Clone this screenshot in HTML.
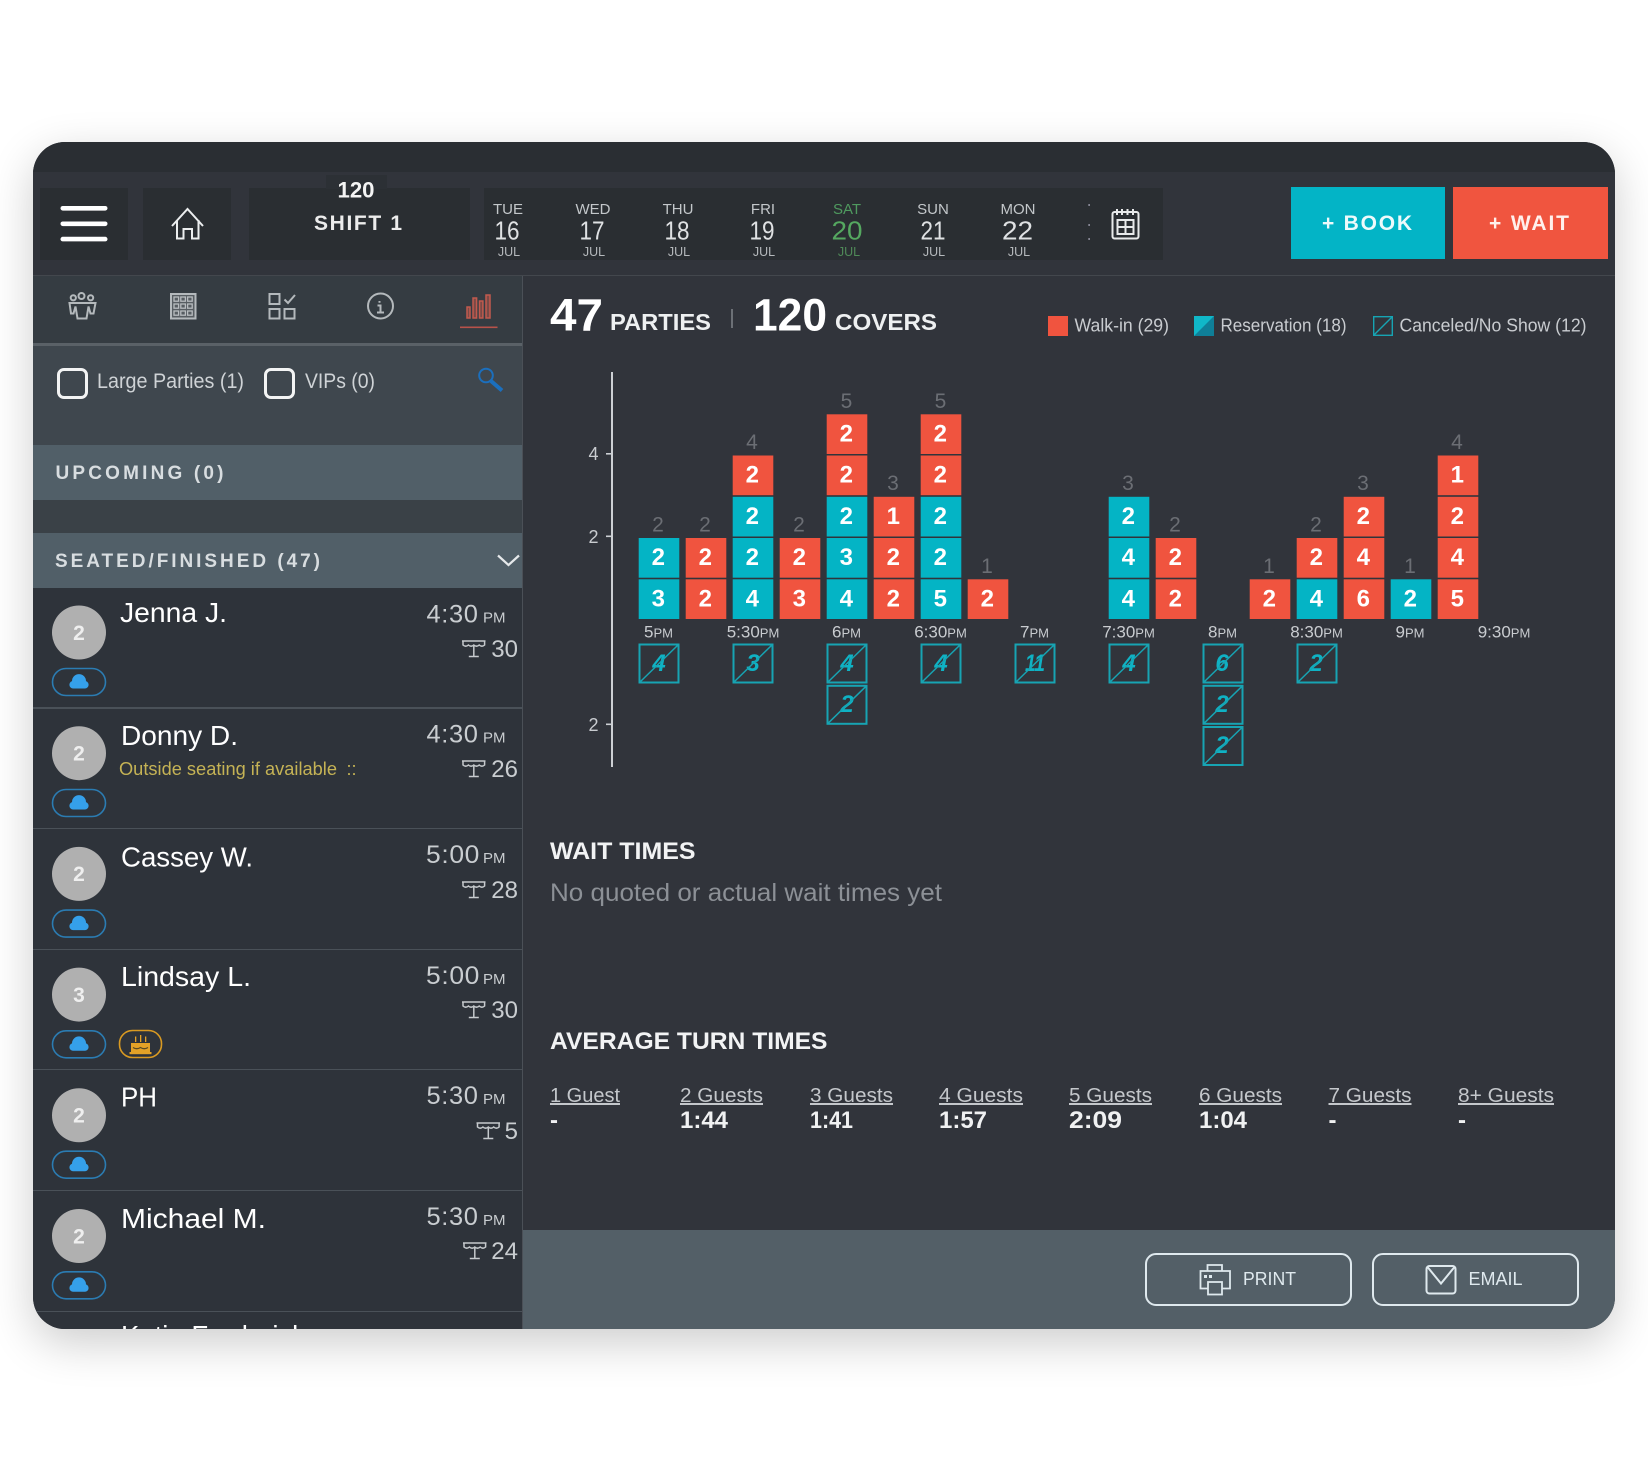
<!DOCTYPE html>
<html lang="en"><head><meta charset="utf-8"><title>Shift report</title>
<style>
html,body{margin:0;padding:0;background:#fff;width:1648px;height:1470px;overflow:hidden}
body{position:relative;font-family:"Liberation Sans",sans-serif}
.card{position:absolute;left:33px;top:142px;width:1582px;height:1187px;border-radius:32px;overflow:hidden;background:#31343b;box-shadow:0 14px 45px rgba(0,0,0,.2)}
.b{position:absolute}
svg{position:absolute;left:-33px;top:-142px;width:1648px;height:1470px}
text{font-family:"Liberation Sans",sans-serif}
rect.t,rect.r,rect.x{width:40.6px;height:39.7px}
rect.t{fill:#04b4c5}rect.r{fill:#f0543f}
rect.x{fill:none;stroke:#17a4b3;stroke-width:2;width:39px;height:38px}
.d{font-size:24px;font-weight:700;fill:#fff;text-anchor:middle;transform:translate(-.7px,-.5px)}
.c{font-size:21px;fill:#6b6e74;text-anchor:middle}
.xd{font-size:24px;font-weight:700;font-style:italic;fill:#0fb2c4;text-anchor:middle;transform:translateY(-1px)}
.dg{stroke:#17a4b3;stroke-width:1.5}
.tm{font-size:17px;fill:#c9ccd0;text-anchor:middle}
.tm tspan{font-size:13px}
.ax{font-size:18px;fill:#c9ccd0;text-anchor:end}
.dw{font-size:15px;fill:#c3c7ca;text-anchor:middle}
.dn{font-size:26px;fill:#dfe1e3;text-anchor:middle}
.dj{font-size:12.5px;fill:#b5b9bc;text-anchor:middle}
.nm{font-size:27.5px;fill:#fff}
.ti{font-size:25px;fill:#c9cdd0;letter-spacing:.6px}
.pm{font-size:15px;fill:#c9cdd0}
.tb{font-size:24px;fill:#c9cdd0;text-anchor:end}
.av{font-size:21px;font-weight:700;fill:#efefef;text-anchor:middle}
.g{font-size:20px;fill:#c4c7cb;text-decoration:underline}
.v{font-size:24px;font-weight:700;fill:#f0f1f2}
.sec{font-size:24px;font-weight:700;fill:#f2f3f4}
.lg{font-size:18px;fill:#c9ccd0}
</style></head>
<body>
<div class="card">
  <div class="b" style="left:0;top:0;width:1582px;height:30px;background:#2a2e33"></div>
  <div class="b" style="left:0;top:30px;width:1582px;height:103px;background:#31343b;border-bottom:1px solid #43474d"></div>
  <div class="b" style="left:7px;top:46px;width:88px;height:72px;background:#2a2e32"></div>
  <div class="b" style="left:110px;top:46px;width:88px;height:72px;background:#2a2e32"></div>
  <div class="b" style="left:216px;top:46px;width:221px;height:72px;background:#2a2e32"></div>
  <div class="b" style="left:293px;top:33px;width:61px;height:14px;background:#2c3035"></div>
  <div class="b" style="left:451px;top:46px;width:679px;height:72px;background:#2a2e32"></div>
  <div class="b" style="left:1258px;top:45px;width:154px;height:72px;background:#03b4c6"></div>
  <div class="b" style="left:1420px;top:45px;width:155px;height:72px;background:#f0553f"></div>

  <div class="b" style="left:0;top:134px;width:489px;height:67px;background:#353c42"></div>
  <div class="b" style="left:0;top:201px;width:489px;height:3px;background:#5a6167"></div>
  <div class="b" style="left:0;top:204px;width:489px;height:99px;background:#3f474e"></div>
  <div class="b" style="left:0;top:303px;width:489px;height:55px;background:#515f68"></div>
  <div class="b" style="left:0;top:358px;width:489px;height:33px;background:#3a4147"></div>
  <div class="b" style="left:0;top:391px;width:489px;height:55px;background:#515f68"></div>
  <div class="b" style="left:0;top:446px;width:489px;height:741px;background:#2e333a"></div>
  <div class="b" style="left:0;top:565px;width:489px;height:1.5px;background:#4a5158"></div>
  <div class="b" style="left:0;top:685.5px;width:489px;height:1.5px;background:#4a5158"></div>
  <div class="b" style="left:0;top:806.5px;width:489px;height:1.5px;background:#4a5158"></div>
  <div class="b" style="left:0;top:926.5px;width:489px;height:1.5px;background:#4a5158"></div>
  <div class="b" style="left:0;top:1047.5px;width:489px;height:1.5px;background:#4a5158"></div>
  <div class="b" style="left:0;top:1168.5px;width:489px;height:1.5px;background:#4a5158"></div>
  <div class="b" style="left:489px;top:134px;width:1px;height:1053px;background:#4b5057"></div>
  <div class="b" style="left:490px;top:1088px;width:1092px;height:99px;background:#535f67"></div>
  <div class="b" style="left:1112px;top:1111px;width:203px;height:49px;border:2px solid #dfe9ee;border-radius:11px"></div>
  <div class="b" style="left:1339px;top:1111px;width:203px;height:49px;border:2px solid #dfe9ee;border-radius:11px"></div>

<svg viewBox="0 0 1648 1470" xmlns="http://www.w3.org/2000/svg">
<defs>
<g id="pill"><rect x="-26.5" y="-13.5" width="53" height="27" rx="13.5" fill="none" stroke="#2b7cb2" stroke-width="1.6"/><path d="M-6 6.5a3.8 3.8 0 0 1-1-7.4a7 7 0 0 1 14 0a3.8 3.8 0 0 1-1 7.4z" fill="#35a0ea"/></g>
<g id="tbl" fill="none" stroke="#c6cacd" stroke-width="1.5"><path d="M0 1H23.5M1 1V5q2.7 2.4 5.4 0q2.7 2.4 5.4 0q2.7 2.4 5.4 0q2.7 2.4 5.4 0V1M11.8 6V16.3M6.8 16.5H16.8"/></g>
</defs>

<!-- header -->
<g fill="#fff"><rect x="60.5" y="206" width="47" height="4.6" rx="2.3"/><rect x="60.5" y="221.5" width="47" height="4.6" rx="2.3"/><rect x="60.5" y="236.8" width="47" height="4.6" rx="2.3"/></g>
<path d="M172 226L187.5 209L203 226M177 220V238.5H183.5V229H192V238.5H198.5V220" fill="none" stroke="#eceeef" stroke-width="2"/>
<text x="356" y="197.5" font-size="22" font-weight="700" fill="#f4f4f4" text-anchor="middle" textLength="37" lengthAdjust="spacingAndGlyphs">120</text>
<text x="314" y="230" font-size="21" font-weight="700" fill="#ececec" textLength="88">SHIFT 1</text>

<text class="dw" x="508" y="214">TUE</text><text class="dn" x="507" y="239.5" textLength="25" lengthAdjust="spacingAndGlyphs">16</text><text class="dj" x="509" y="256">JUL</text>
<text class="dw" x="593" y="214">WED</text><text class="dn" x="592" y="239.5" textLength="25" lengthAdjust="spacingAndGlyphs">17</text><text class="dj" x="594" y="256">JUL</text>
<text class="dw" x="678" y="214">THU</text><text class="dn" x="677" y="239.5" textLength="25" lengthAdjust="spacingAndGlyphs">18</text><text class="dj" x="679" y="256">JUL</text>
<text class="dw" x="763" y="214">FRI</text><text class="dn" x="762" y="239.5" textLength="25" lengthAdjust="spacingAndGlyphs">19</text><text class="dj" x="764" y="256">JUL</text>
<text class="dw" x="847" y="214" style="fill:#4f9a5f">SAT</text><text class="dn" x="847" y="239.5" style="fill:#55a860" textLength="31" lengthAdjust="spacingAndGlyphs">20</text><text class="dj" x="849" y="256" style="fill:#4f8a58">JUL</text>
<text class="dw" x="933" y="214">SUN</text><text class="dn" x="933" y="239.5" textLength="25" lengthAdjust="spacingAndGlyphs">21</text><text class="dj" x="934" y="256">JUL</text>
<text class="dw" x="1018" y="214">MON</text><text class="dn" x="1017.5" y="239.5" textLength="31" lengthAdjust="spacingAndGlyphs">22</text><text class="dj" x="1019" y="256">JUL</text>
<g fill="#aab"><rect x="1088.5" y="204" width="1.2" height="2"/><rect x="1088.5" y="224" width="1.2" height="2"/><rect x="1088.5" y="238" width="1.2" height="2"/></g>
<g fill="none" stroke="#e8eaeb" stroke-width="2"><rect x="1112.5" y="212" width="26" height="26.5" rx="2"/><path d="M1117 209v6M1122 209v6M1127.5 209v6M1133 209v6"/><rect x="1117.5" y="220" width="16" height="14"/><path d="M1125.5 220v14M1117.5 227h16"/></g>

<text x="1322" y="230" font-size="21" font-weight="700" fill="#eefafb" textLength="90">+ BOOK</text>
<text x="1489" y="230" font-size="21" font-weight="700" fill="#fff0ec" textLength="80">+ WAIT</text>

<!-- tab icons -->
<g fill="none" stroke="#b4b9bc" stroke-width="2">
<circle cx="73.3" cy="297.8" r="2.6"/><circle cx="81.5" cy="296" r="3"/><circle cx="90.6" cy="297.8" r="2.6"/>
<path d="M69.5 303H95.5L93.5 313.5H90.5L88.5 306.5L86.5 318.5H77.5L75.5 306.5L73.5 313.5H71Z"/>
<rect x="171" y="294" width="24.5" height="24.5" fill="#575d62"/>
</g>
<g fill="none" stroke="#b9bdc0" stroke-width="1.3">
<rect x="174" y="297" width="4.6" height="4.2"/><rect x="180.8" y="297" width="4.6" height="4.2"/><rect x="187.6" y="297" width="4.6" height="4.2"/>
<rect x="174" y="304" width="4.6" height="4.2"/><rect x="180.8" y="304" width="4.6" height="4.2"/><rect x="187.6" y="304" width="4.6" height="4.2"/>
<rect x="174" y="311" width="4.6" height="4.2"/><rect x="180.8" y="311" width="4.6" height="4.2"/><rect x="187.6" y="311" width="4.6" height="4.2"/>
</g>
<g fill="none" stroke="#b4b9bc" stroke-width="2">
<rect x="269.5" y="294" width="10" height="10"/><rect x="269.5" y="309" width="10" height="9.5"/><rect x="284.5" y="309" width="10" height="9.5"/>
<path d="M284.5 299.5l3.5 3.5l7-8"/>
<circle cx="380.5" cy="306" r="12.5"/>
</g>
<path d="M379.5 301v1.8M377.5 305.5h3v6.5M377 312.5h7" fill="none" stroke="#b4b9bc" stroke-width="2"/>
<g fill="#7a4a46" stroke="#c25a4e" stroke-width="1.5"><rect x="467" y="307" width="3" height="11"/><rect x="473" y="298" width="3.6" height="20"/><rect x="479.5" y="301" width="3.4" height="17"/><rect x="486" y="295" width="4" height="23"/></g>
<rect x="460" y="326.5" width="37.5" height="1.6" fill="#b8524a"/>

<!-- filter -->
<rect x="58.5" y="369.5" width="28" height="28" rx="5.5" fill="none" stroke="#f3f4f4" stroke-width="3"/>
<rect x="265.5" y="369.5" width="28" height="28" rx="5.5" fill="none" stroke="#f3f4f4" stroke-width="3"/>
<text x="97" y="388" font-size="21" fill="#cfd3d6" textLength="147" lengthAdjust="spacingAndGlyphs">Large Parties (1)</text>
<text x="305" y="388" font-size="21" fill="#cfd3d6" textLength="70" lengthAdjust="spacingAndGlyphs">VIPs (0)</text>
<circle cx="486" cy="375.5" r="6.8" fill="none" stroke="#1b6fbd" stroke-width="2"/><path d="M491 381L502 390.5" stroke="#1b6fbd" stroke-width="4" fill="none"/>
<text x="55.5" y="479" font-size="19" font-weight="700" fill="#d8dde0" textLength="168">UPCOMING (0)</text>
<text x="55" y="567" font-size="19" font-weight="700" fill="#d8dde0" textLength="265">SEATED/FINISHED (47)</text>
<path d="M498 555.5L508.5 565L519 555.5" fill="none" stroke="#e6e9eb" stroke-width="2.2"/>

<!-- rows -->
<circle cx="79" cy="632.5" r="27" fill="#b0b0b0"/><text class="av" x="79" y="640">2</text><use href="#pill" x="79" y="682"/>
<text class="nm" x="120" y="622" textLength="107" lengthAdjust="spacingAndGlyphs">Jenna J.</text>
<text class="ti" x="426.5" y="622.5" textLength="52" lengthAdjust="spacingAndGlyphs">4:30</text><text class="pm" x="483" y="622.5">PM</text>
<use href="#tbl" x="462" y="640"/><text class="tb" x="518" y="657">30</text>

<circle cx="79" cy="753.2" r="27" fill="#b0b0b0"/><text class="av" x="79" y="760.5">2</text><use href="#pill" x="79" y="803"/>
<text class="nm" x="121" y="745" textLength="117" lengthAdjust="spacingAndGlyphs">Donny D.</text>
<text x="119" y="775" font-size="18" fill="#c5b355" textLength="218" lengthAdjust="spacingAndGlyphs">Outside seating if available</text><text x="346.5" y="775" font-size="18" fill="#c5b355">::</text>
<text class="ti" x="426.5" y="742.5" textLength="52" lengthAdjust="spacingAndGlyphs">4:30</text><text class="pm" x="483" y="742.5">PM</text>
<use href="#tbl" x="462" y="760"/><text class="tb" x="518" y="777">26</text>

<circle cx="79" cy="873.9" r="27" fill="#b0b0b0"/><text class="av" x="79" y="881.2">2</text><use href="#pill" x="79" y="923.6"/>
<text class="nm" x="121" y="866.5" textLength="132" lengthAdjust="spacingAndGlyphs">Cassey W.</text>
<text class="ti" x="426" y="863" textLength="54" lengthAdjust="spacingAndGlyphs">5:00</text><text class="pm" x="483" y="863">PM</text>
<use href="#tbl" x="462" y="881"/><text class="tb" x="518" y="898">28</text>

<circle cx="79" cy="994.6" r="27" fill="#b0b0b0"/><text class="av" x="79" y="1002">3</text><use href="#pill" x="79" y="1044.3"/>
<text class="nm" x="121" y="986" textLength="130" lengthAdjust="spacingAndGlyphs">Lindsay L.</text>
<text class="ti" x="426" y="984" textLength="54" lengthAdjust="spacingAndGlyphs">5:00</text><text class="pm" x="483" y="984">PM</text>
<use href="#tbl" x="462" y="1001"/><text class="tb" x="518" y="1018">30</text>
<rect x="119.5" y="1030.5" width="42" height="27" rx="13" fill="none" stroke="#d99a22" stroke-width="1.6"/>
<g fill="#e4a227"><rect x="131" y="1043" width="19" height="9.5"/><rect x="129.5" y="1052" width="22" height="2.2"/><rect x="135" y="1036.5" width="1.3" height="5.5"/><rect x="140" y="1035" width="1.3" height="7"/><rect x="145" y="1036.5" width="1.3" height="5.5"/></g>
<path d="M133 1047.5q3.7 2.4 7.5 0q3.7 2.4 7.5 0" fill="none" stroke="#5a4a22" stroke-width="1.3"/>

<circle cx="79" cy="1115.3" r="27" fill="#b0b0b0"/><text class="av" x="79" y="1122.5">2</text><use href="#pill" x="79" y="1164.7"/>
<text class="nm" x="121" y="1106.5" textLength="36" lengthAdjust="spacingAndGlyphs">PH</text>
<text class="ti" x="426.5" y="1104" textLength="52" lengthAdjust="spacingAndGlyphs">5:30</text><text class="pm" x="483" y="1104">PM</text>
<use href="#tbl" x="476.5" y="1122"/><text class="tb" x="518" y="1139">5</text>

<circle cx="79" cy="1236" r="27" fill="#b0b0b0"/><text class="av" x="79" y="1243.5">2</text><use href="#pill" x="79" y="1285.3"/>
<text class="nm" x="121" y="1228" textLength="145" lengthAdjust="spacingAndGlyphs">Michael M.</text>
<text class="ti" x="426.5" y="1225" textLength="52" lengthAdjust="spacingAndGlyphs">5:30</text><text class="pm" x="483" y="1225">PM</text>
<use href="#tbl" x="463" y="1242"/><text class="tb" x="518" y="1259">24</text>

<text class="nm" x="121" y="1345">Katie Frederick</text>

<!-- summary -->
<text x="550" y="330.5" font-size="45" font-weight="700" fill="#fff" textLength="53" lengthAdjust="spacingAndGlyphs">47</text>
<text x="610" y="330" font-size="23.5" font-weight="700" fill="#eef0f1" textLength="101" lengthAdjust="spacingAndGlyphs">PARTIES</text>
<rect x="731" y="309" width="2" height="19" fill="#6c7076"/>
<text x="753" y="330.5" font-size="45" font-weight="700" fill="#fff" textLength="74" lengthAdjust="spacingAndGlyphs">120</text>
<text x="835" y="330" font-size="23.5" font-weight="700" fill="#eef0f1" textLength="102" lengthAdjust="spacingAndGlyphs">COVERS</text>

<rect x="1048" y="316" width="20" height="20" fill="#f0543f"/>
<text class="lg" x="1074.5" y="331.5" textLength="94.5" lengthAdjust="spacingAndGlyphs">Walk-in (29)</text>
<rect x="1194" y="316" width="20" height="20" fill="#0f7f98"/><path d="M1194 316H1214L1194 336Z" fill="#10b7c8"/>
<text class="lg" x="1220.5" y="331.5" textLength="126" lengthAdjust="spacingAndGlyphs">Reservation (18)</text>
<rect x="1373.7" y="316.7" width="18.6" height="18.6" fill="none" stroke="#17a4b3" stroke-width="1.4"/><path d="M1373.7 335.3L1392.3 316.7" stroke="#17a4b3" stroke-width="1.4"/>
<text class="lg" x="1399.5" y="331.5" textLength="187" lengthAdjust="spacingAndGlyphs">Canceled/No Show (12)</text>

<!-- chart axis -->
<rect x="611" y="372" width="2" height="395" fill="#cdd0d4"/>
<g fill="#cdd0d4"><rect x="606" y="453" width="6" height="1.6"/><rect x="606" y="535.5" width="6" height="1.6"/><rect x="606" y="723.5" width="6" height="1.6"/></g>
<text class="ax" x="598.5" y="460">4</text><text class="ax" x="598.5" y="543">2</text><text class="ax" x="598.5" y="731">2</text>

<!-- col 0 -->
<rect class="t" x="638.7" y="579.3"/><text class="d" x="659" y="607">3</text>
<rect class="t" x="638.7" y="538"/><text class="d" x="659" y="565.5">2</text>
<text class="c" x="658" y="531.5">2</text>
<!-- col 1 -->
<rect class="r" x="685.7" y="579.3"/><text class="d" x="706" y="607">2</text>
<rect class="r" x="685.7" y="538"/><text class="d" x="706" y="565.5">2</text>
<text class="c" x="705" y="531.5">2</text>
<!-- col 2 -->
<rect class="t" x="732.7" y="579.3"/><text class="d" x="753" y="607">4</text>
<rect class="t" x="732.7" y="538"/><text class="d" x="753" y="565.5">2</text>
<rect class="t" x="732.7" y="496.8"/><text class="d" x="753" y="524.3">2</text>
<rect class="r" x="732.7" y="455.5"/><text class="d" x="753" y="483">2</text>
<text class="c" x="752" y="449">4</text>
<!-- col 3 -->
<rect class="r" x="779.7" y="579.3"/><text class="d" x="800" y="607">3</text>
<rect class="r" x="779.7" y="538"/><text class="d" x="800" y="565.5">2</text>
<text class="c" x="799" y="531.5">2</text>
<!-- col 4 -->
<rect class="t" x="826.7" y="579.3"/><text class="d" x="847" y="607">4</text>
<rect class="t" x="826.7" y="538"/><text class="d" x="847" y="565.5">3</text>
<rect class="t" x="826.7" y="496.8"/><text class="d" x="847" y="524.3">2</text>
<rect class="r" x="826.7" y="455.5"/><text class="d" x="847" y="483">2</text>
<rect class="r" x="826.7" y="414.3"/><text class="d" x="847" y="441.8">2</text>
<text class="c" x="846.5" y="408">5</text>
<!-- col 5 -->
<rect class="r" x="873.7" y="579.3"/><text class="d" x="894" y="607">2</text>
<rect class="r" x="873.7" y="538"/><text class="d" x="894" y="565.5">2</text>
<rect class="r" x="873.7" y="496.8"/><text class="d" x="894" y="524.3">1</text>
<text class="c" x="893" y="490">3</text>
<!-- col 6 -->
<rect class="t" x="920.7" y="579.3"/><text class="d" x="941" y="607">5</text>
<rect class="t" x="920.7" y="538"/><text class="d" x="941" y="565.5">2</text>
<rect class="t" x="920.7" y="496.8"/><text class="d" x="941" y="524.3">2</text>
<rect class="r" x="920.7" y="455.5"/><text class="d" x="941" y="483">2</text>
<rect class="r" x="920.7" y="414.3"/><text class="d" x="941" y="441.8">2</text>
<text class="c" x="940.5" y="408">5</text>
<!-- col 7 -->
<rect class="r" x="967.7" y="579.3"/><text class="d" x="988" y="607">2</text>
<text class="c" x="987" y="573">1</text>
<!-- col 10 -->
<rect class="t" x="1108.7" y="579.3"/><text class="d" x="1129" y="607">4</text>
<rect class="t" x="1108.7" y="538"/><text class="d" x="1129" y="565.5">4</text>
<rect class="t" x="1108.7" y="496.8"/><text class="d" x="1129" y="524.3">2</text>
<text class="c" x="1128" y="490">3</text>
<!-- col 11 -->
<rect class="r" x="1155.7" y="579.3"/><text class="d" x="1176" y="607">2</text>
<rect class="r" x="1155.7" y="538"/><text class="d" x="1176" y="565.5">2</text>
<text class="c" x="1175" y="531.5">2</text>
<!-- col 13 -->
<rect class="r" x="1249.7" y="579.3"/><text class="d" x="1270" y="607">2</text>
<text class="c" x="1269" y="573">1</text>
<!-- col 14 -->
<rect class="t" x="1296.7" y="579.3"/><text class="d" x="1317" y="607">4</text>
<rect class="r" x="1296.7" y="538"/><text class="d" x="1317" y="565.5">2</text>
<text class="c" x="1316" y="531.5">2</text>
<!-- col 15 -->
<rect class="r" x="1343.7" y="579.3"/><text class="d" x="1364" y="607">6</text>
<rect class="r" x="1343.7" y="538"/><text class="d" x="1364" y="565.5">4</text>
<rect class="r" x="1343.7" y="496.8"/><text class="d" x="1364" y="524.3">2</text>
<text class="c" x="1363" y="490">3</text>
<!-- col 16 -->
<rect class="t" x="1390.7" y="579.3"/><text class="d" x="1411" y="607">2</text>
<text class="c" x="1410" y="573">1</text>
<!-- col 17 -->
<rect class="r" x="1437.7" y="579.3"/><text class="d" x="1458" y="607">5</text>
<rect class="r" x="1437.7" y="538"/><text class="d" x="1458" y="565.5">4</text>
<rect class="r" x="1437.7" y="496.8"/><text class="d" x="1458" y="524.3">2</text>
<rect class="r" x="1437.7" y="455.5"/><text class="d" x="1458" y="483">1</text>
<text class="c" x="1457" y="449">4</text>

<!-- time labels -->
<text class="tm" x="658.5" y="637.5">5<tspan>PM</tspan></text>
<text class="tm" x="753" y="637.5">5:30<tspan>PM</tspan></text>
<text class="tm" x="846.5" y="637.5">6<tspan>PM</tspan></text>
<text class="tm" x="940.5" y="637.5">6:30<tspan>PM</tspan></text>
<text class="tm" x="1034.5" y="637.5">7<tspan>PM</tspan></text>
<text class="tm" x="1128.5" y="637.5">7:30<tspan>PM</tspan></text>
<text class="tm" x="1222.5" y="637.5">8<tspan>PM</tspan></text>
<text class="tm" x="1316.5" y="637.5">8:30<tspan>PM</tspan></text>
<text class="tm" x="1410" y="637.5">9<tspan>PM</tspan></text>
<text class="tm" x="1504" y="637.5">9:30<tspan>PM</tspan></text>

<!-- canceled -->
<rect class="x" x="639.5" y="644.5"/><text class="xd" x="659" y="672">4</text><path class="dg" d="M639.5 682.5L678.5 644.5"/>
<rect class="x" x="733.5" y="644.5"/><text class="xd" x="753" y="672">3</text><path class="dg" d="M733.5 682.5L772.5 644.5"/>
<rect class="x" x="827.5" y="644.5"/><text class="xd" x="847" y="672">4</text><path class="dg" d="M827.5 682.5L866.5 644.5"/>
<rect class="x" x="827.5" y="685.8"/><text class="xd" x="847" y="713">2</text><path class="dg" d="M827.5 723.8L866.5 685.8"/>
<rect class="x" x="921.5" y="644.5"/><text class="xd" x="941" y="672">4</text><path class="dg" d="M921.5 682.5L960.5 644.5"/>
<rect class="x" x="1015.5" y="644.5"/><text class="xd" x="1035" y="672" textLength="20" lengthAdjust="spacingAndGlyphs">11</text><path class="dg" d="M1015.5 682.5L1054.5 644.5"/>
<rect class="x" x="1109.5" y="644.5"/><text class="xd" x="1129" y="672">4</text><path class="dg" d="M1109.5 682.5L1148.5 644.5"/>
<rect class="x" x="1203.5" y="644.5"/><text class="xd" x="1222" y="672">6</text><path class="dg" d="M1203.5 682.5L1242.5 644.5"/>
<rect class="x" x="1203.5" y="685.8"/><text class="xd" x="1222" y="713">2</text><path class="dg" d="M1203.5 723.8L1242.5 685.8"/>
<rect class="x" x="1203.5" y="727"/><text class="xd" x="1222" y="754">2</text><path class="dg" d="M1203.5 765L1242.5 727"/>
<rect class="x" x="1297.5" y="644.5"/><text class="xd" x="1316" y="672">2</text><path class="dg" d="M1297.5 682.5L1336.5 644.5"/>

<!-- wait times -->
<text class="sec" x="550" y="859" textLength="145.5" lengthAdjust="spacingAndGlyphs">WAIT TIMES</text>
<text x="550" y="901" font-size="25" fill="#8c9096" textLength="392" lengthAdjust="spacingAndGlyphs">No quoted or actual wait times yet</text>
<text class="sec" x="550" y="1049" textLength="277.5" lengthAdjust="spacingAndGlyphs">AVERAGE TURN TIMES</text>

<text class="g" x="550" y="1102" textLength="70" lengthAdjust="spacingAndGlyphs">1 Guest</text><text class="v" x="550" y="1128">-</text>
<text class="g" x="680" y="1102" textLength="83" lengthAdjust="spacingAndGlyphs">2 Guests</text><text class="v" x="680" y="1128" textLength="48" lengthAdjust="spacingAndGlyphs">1:44</text>
<text class="g" x="810" y="1102" textLength="83" lengthAdjust="spacingAndGlyphs">3 Guests</text><text class="v" x="810" y="1128" textLength="43" lengthAdjust="spacingAndGlyphs">1:41</text>
<text class="g" x="939" y="1102" textLength="84" lengthAdjust="spacingAndGlyphs">4 Guests</text><text class="v" x="939" y="1128" textLength="48" lengthAdjust="spacingAndGlyphs">1:57</text>
<text class="g" x="1069" y="1102" textLength="83" lengthAdjust="spacingAndGlyphs">5 Guests</text><text class="v" x="1069" y="1128" textLength="53" lengthAdjust="spacingAndGlyphs">2:09</text>
<text class="g" x="1199" y="1102" textLength="83" lengthAdjust="spacingAndGlyphs">6 Guests</text><text class="v" x="1199" y="1128" textLength="48" lengthAdjust="spacingAndGlyphs">1:04</text>
<text class="g" x="1328.5" y="1102" textLength="83" lengthAdjust="spacingAndGlyphs">7 Guests</text><text class="v" x="1328.5" y="1128">-</text>
<text class="g" x="1458" y="1102" textLength="96" lengthAdjust="spacingAndGlyphs">8+ Guests</text><text class="v" x="1458" y="1128">-</text>

<!-- footer buttons -->
<g fill="none" stroke="#dfe9ee" stroke-width="1.8">
<path d="M1207.5 1271V1265H1222V1271"/>
<path d="M1208 1288.5H1200.5V1271H1230V1288.5H1222"/>
<rect x="1208" y="1282" width="14" height="12.5" fill="#535f67"/>
</g>
<g fill="#dfe9ee"><rect x="1204" y="1275" width="3" height="3"/><rect x="1209" y="1275" width="3" height="3"/></g>
<text x="1243" y="1285" font-size="18.5" fill="#dfe9ee" textLength="53" lengthAdjust="spacingAndGlyphs">PRINT</text>
<g fill="none" stroke="#dfe9ee" stroke-width="2"><rect x="1426.5" y="1266" width="29" height="27.5" rx="3"/><path d="M1427.5 1267L1441 1283.5L1454.5 1267"/></g>
<text x="1468.5" y="1285" font-size="18.5" fill="#dfe9ee" textLength="54" lengthAdjust="spacingAndGlyphs">EMAIL</text>
</svg>
</div>
</body></html>
